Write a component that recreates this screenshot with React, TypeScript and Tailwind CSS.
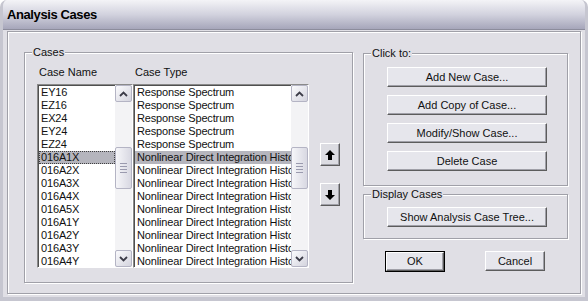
import React from 'react';

const font = "font-['Liberation_Sans',Arial,sans-serif]";

const caseNames = [
  'EY16', 'EZ16', 'EX24', 'EY24', 'EZ24',
  '016A1X', '016A2X', '016A3X', '016A4X', '016A5X',
  '016A1Y', '016A2Y', '016A3Y', '016A4Y',
];

const caseTypes = caseNames.map((_, i) =>
  i < 5 ? 'Response Spectrum' : 'Nonlinear Direct Integration History'
);

const Chevron: React.FC<{ down?: boolean }> = ({ down }) => (
  <svg width="9" height="6" viewBox="0 0 9 6">
    <path
      d={down ? 'M1 1 L4.5 4.5 L8 1' : 'M1 5 L4.5 1.5 L8 5'}
      fill="none"
      stroke="#3c3c48"
      strokeWidth="1.8"
    />
  </svg>
);

const ScrollButton: React.FC<{ down?: boolean }> = ({ down }) => (
  <div className="h-[17px] w-[17px] flex items-center justify-center rounded-[2px] border border-[#b4b4c4] bg-gradient-to-br from-[#fbfbfd] to-[#d4d4de]">
    <Chevron down={down} />
  </div>
);

const ScrollBar: React.FC = () => (
  <div className="w-[17px] flex flex-col bg-[#f3f3f5]">
    <ScrollButton />
    <div className="flex-1 flex flex-col">
      <div className="h-[45px]" />
      <div className="h-[42px] rounded-[2px] border border-[#b4b4c4] bg-gradient-to-r from-[#f6f6f9] to-[#d8d8e2] flex flex-col items-center justify-center gap-[2px]">
        <div className="w-[7px] h-px bg-[#9a9aae]" />
        <div className="w-[7px] h-px bg-[#9a9aae]" />
        <div className="w-[7px] h-px bg-[#9a9aae]" />
        <div className="w-[7px] h-px bg-[#9a9aae]" />
      </div>
    </div>
    <ScrollButton down />
  </div>
);

interface ListBoxProps {
  items: string[];
  selected: number;
  width: string;
  focus?: boolean;
}

const ListBox: React.FC<ListBoxProps> = ({ items, selected, width, focus }) => (
  <div className={`${width} h-[184px] flex border border-t-[#8a8a8a] border-l-[#8a8a8a] border-b-white border-r-white shadow-[inset_1px_1px_0_#505050] bg-white`}>
    <div className="flex-1 overflow-hidden pt-px pl-px">
      {items.map((item, i) => (
        <div
          key={i}
          className={`h-[13px] leading-[13px] pl-[2px] whitespace-nowrap text-[11px] tracking-[-0.15px] text-[#111] ${
            i === selected ? 'bg-[#b5b5bd]' : ''
          } ${i === selected && focus ? 'outline-1 outline-dotted outline-offset-[-1px] outline-[#404040]' : ''}`}
        >
          {item}
        </div>
      ))}
    </div>
    <ScrollBar />
  </div>
);

const Button: React.FC<{ label: string; className?: string; isDefault?: boolean }> = ({
  label,
  className = '',
  isDefault,
}) => (
  <div className={`${isDefault ? 'border border-black' : ''} ${className}`}>
    <button
      type="button"
      className={`w-full h-full flex items-center justify-center text-[11px] text-[#111] bg-[#e6e6ec] border border-t-white border-l-white border-b-[#5c5c5c] border-r-[#5c5c5c] shadow-[inset_-1px_-1px_0_#a0a0a8] ${font}`}
    >
      {label}
    </button>
  </div>
);

const GroupBox: React.FC<{ label: string; className?: string; children: React.ReactNode }> = ({
  label,
  className = '',
  children,
}) => (
  <div className={`relative border border-[#a0a0a8] shadow-[inset_1px_1px_0_#fff,1px_1px_0_#fff] ${className}`}>
    <span className="absolute left-[7px] top-[-7px] px-[1px] bg-[#e0dfe5] text-[11px] leading-[13px] text-[#111]">
      {label}
    </span>
    {children}
  </div>
);

const ArrowButton: React.FC<{ down?: boolean }> = ({ down }) => (
  <button
    type="button"
    className="w-[20px] h-[23px] flex items-center justify-center bg-[#dcdce2] border border-t-white border-l-white border-b-[#5c5c5c] border-r-[#5c5c5c] shadow-[inset_-1px_-1px_0_#a0a0a8]"
  >
    <svg width="10" height="10" viewBox="0 0 10 10">
      <polygon
        points={down ? '5,10 0,5 3,5 3,0 7,0 7,5 10,5' : '5,0 0,5 3,5 3,10 7,10 7,5 10,5'}
        fill="#000"
      />
    </svg>
  </button>
);

export default function App() {
  return (
    <div className={`w-[588px] h-[301px] flex flex-col bg-[#e0dfe5] border-x-[3px] border-b-[4px] border-[#c6c6d0] rounded-t-[7px] overflow-hidden ${font}`}>
      {/* title bar */}
      <div className="h-[30px] shrink-0 flex items-center pl-[4px] bg-gradient-to-b from-[#f4f4f7] via-[#d2d2de] to-[#a6a6ba] border-b border-[#8c8c9c]">
        <span className="text-[13px] font-bold tracking-[-0.4px] text-black">Analysis Cases</span>
      </div>

      {/* body */}
      <div className="flex-1 pl-[4px] pr-[4px] pt-[1px] pb-[3px]">
        <div className="h-full flex items-start pl-[16px] pt-[20px] border border-[#a0a0a8] shadow-[inset_1px_1px_0_#fff,1px_1px_0_#fff]">
          <GroupBox label="Cases" className="w-[329px] h-[231px] shrink-0">
            <div className="pl-[12px] pt-[13px]">
              <div className="flex text-[11px] leading-[13px] text-[#111] h-[18px]">
                <span className="w-[96px] pl-[2px]">Case Name</span>
                <span className="pl-[2px]">Case Type</span>
              </div>
              <div className="flex items-start">
                <ListBox items={caseNames} selected={5} width="w-[96px]" focus />
                <ListBox items={caseTypes} selected={5} width="w-[176px]" />
                <div className="ml-[11px] pt-[59px] flex flex-col gap-[17px]">
                  <ArrowButton />
                  <ArrowButton down />
                </div>
              </div>
            </div>
          </GroupBox>

          <div className="ml-[10px] mt-[1px] w-[205px] flex flex-col">
            <GroupBox label="Click to:" className="h-[133px]">
              <div className="pl-[23px] pt-[13px] flex flex-col gap-[8px]">
                <Button label="Add New Case..." className="w-[160px] h-[20px]" />
                <Button label="Add Copy of Case..." className="w-[160px] h-[20px]" />
                <Button label="Modify/Show Case..." className="w-[160px] h-[20px]" />
                <Button label="Delete Case" className="w-[160px] h-[20px]" />
              </div>
            </GroupBox>
            <GroupBox label="Display Cases" className="mt-[8px] h-[45px]">
              <div className="pl-[23px] pt-[12px]">
                <Button label="Show Analysis Case Tree..." className="w-[160px] h-[20px]" />
              </div>
            </GroupBox>
            <div className="mt-[12px] pl-[22px] flex gap-[40px]">
              <Button label="OK" isDefault className="w-[60px] h-[21px]" />
              <Button label="Cancel" className="w-[60px] h-[20px]" />
            </div>
          </div>
        </div>
      </div>
    </div>
  );
}
